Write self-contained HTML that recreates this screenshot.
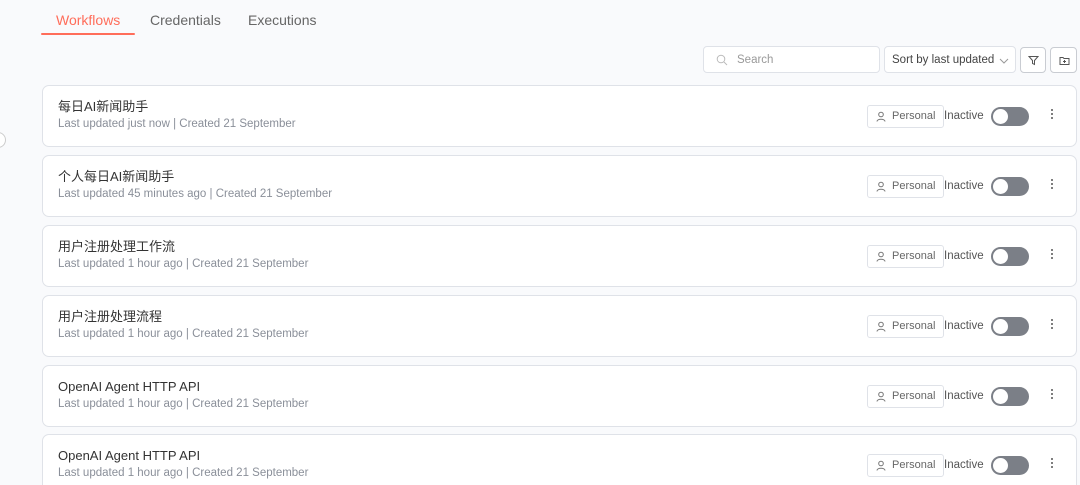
<!DOCTYPE html>
<html><head><meta charset="utf-8"><style>
*{box-sizing:border-box;margin:0;padding:0}
html,body{width:1080px;height:485px;overflow:hidden}
body{background:#f9fafc;font-family:"Liberation Sans","Noto Sans CJK SC",sans-serif;position:relative;color:#333}
.tab{position:absolute;top:12px;font-size:14px;color:#666;line-height:16px}
.ul{position:absolute;left:41px;top:33px;width:94px;height:2px;background:#ff6d5a;border-radius:1px}
.box{position:absolute;background:#fff;border:1px solid #dfe2e8;border-radius:4px}
.card{position:absolute;left:42px;width:1035px;height:62px;background:#fff;border:1px solid #dfe2e8;border-radius:7px}
.t{position:absolute;left:15px;top:13px;font-size:13px;color:#333;line-height:16px;height:16px}
.s{position:absolute;left:15px;top:31px;font-size:11.5px;color:#8a8f99;line-height:14px}
.p{position:absolute;left:824px;top:19px;width:77px;height:23px;border:1px solid #dfe2e8;border-radius:3px;font-size:11px;color:#666;padding-left:24px;line-height:21px}
.p svg{position:absolute;left:8px;top:5px}
.in{position:absolute;left:901px;top:23px;font-size:11.5px;color:#555;line-height:14px}
.tg{position:absolute;left:948px;top:21px;width:38px;height:19px;border-radius:10px;background:#7b7f87}
.tg:after{content:"";position:absolute;left:2px;top:2px;width:15px;height:15px;border-radius:50%;background:#fff}
.d{position:absolute;left:1008px;top:23px;width:2px}
.d i{display:block;width:2px;height:2px;background:#555;border-radius:1px;margin-bottom:2px}
</style></head><body>
<div class="tab" style="left:56px;color:#ff6d5a">Workflows</div>
<div class="tab" style="left:150px">Credentials</div>
<div class="tab" style="left:248px">Executions</div>
<div class="ul"></div>
<div style="position:absolute;left:-10px;top:132px;width:16px;height:16px;border:1px solid #ccc;border-radius:50%;background:#fff"></div>

<div class="box" style="left:703px;top:46px;width:177px;height:27px">
<svg style="position:absolute;left:12px;top:7px" width="12" height="12" viewBox="0 0 12 12" fill="none" stroke="#bbb" stroke-width="1"><circle cx="5" cy="5" r="3.8"/><path d="M8 8l3 3"/></svg>
<span style="position:absolute;left:33px;top:6px;font-size:11.5px;color:#999;line-height:14px">Search</span></div>
<div class="box" style="left:884px;top:46px;width:132px;height:27px"><span style="position:absolute;left:7px;top:6px;font-size:11.5px;color:#444;line-height:14px">Sort by last updated</span>
<svg style="position:absolute;left:114px;top:11px" width="10" height="6" viewBox="0 0 10 6" fill="none" stroke="#999"><path d="M1 1l4 4 4-4"/></svg></div>
<div class="box" style="left:1020px;top:47px;width:26px;height:26px;border-color:#c9ccd2">
<svg style="position:absolute;left:7px;top:7px" width="11" height="11" viewBox="0 0 11 11" fill="none" stroke="#555"><path d="M1 1.5h9L6.5 5.5v4L4.5 8.5v-3z"/></svg></div>
<div class="box" style="left:1050px;top:47px;width:27px;height:26px;border-color:#c9ccd2">
<svg style="position:absolute;left:8px;top:8px" width="11" height="10" viewBox="0 0 11 10" fill="none" stroke="#555"><path d="M1 1.5h3l1 1h5v6H1z"/><path d="M5.5 4v3M4 5.5h3"/></svg></div>

<div class="card" style="top:85px"><div class="t">每日AI新闻助手</div><div class="s">Last updated just now | Created 21 September</div><div class="p"><svg width="10" height="11" viewBox="0 0 10 11" fill="none" stroke="#777"><circle cx="5" cy="3.5" r="2.3"/><path d="M1 10.5c0-3 8-3 8 0"/></svg>Personal</div><div class="in">Inactive</div><div class="tg"></div><div class="d"><i></i><i></i><i></i></div></div>
<div class="card" style="top:155px"><div class="t">个人每日AI新闻助手</div><div class="s">Last updated 45 minutes ago | Created 21 September</div><div class="p"><svg width="10" height="11" viewBox="0 0 10 11" fill="none" stroke="#777"><circle cx="5" cy="3.5" r="2.3"/><path d="M1 10.5c0-3 8-3 8 0"/></svg>Personal</div><div class="in">Inactive</div><div class="tg"></div><div class="d"><i></i><i></i><i></i></div></div>
<div class="card" style="top:225px"><div class="t">用户注册处理工作流</div><div class="s">Last updated 1 hour ago | Created 21 September</div><div class="p"><svg width="10" height="11" viewBox="0 0 10 11" fill="none" stroke="#777"><circle cx="5" cy="3.5" r="2.3"/><path d="M1 10.5c0-3 8-3 8 0"/></svg>Personal</div><div class="in">Inactive</div><div class="tg"></div><div class="d"><i></i><i></i><i></i></div></div>
<div class="card" style="top:295px"><div class="t">用户注册处理流程</div><div class="s">Last updated 1 hour ago | Created 21 September</div><div class="p"><svg width="10" height="11" viewBox="0 0 10 11" fill="none" stroke="#777"><circle cx="5" cy="3.5" r="2.3"/><path d="M1 10.5c0-3 8-3 8 0"/></svg>Personal</div><div class="in">Inactive</div><div class="tg"></div><div class="d"><i></i><i></i><i></i></div></div>
<div class="card" style="top:365px"><div class="t">OpenAI Agent HTTP API</div><div class="s">Last updated 1 hour ago | Created 21 September</div><div class="p"><svg width="10" height="11" viewBox="0 0 10 11" fill="none" stroke="#777"><circle cx="5" cy="3.5" r="2.3"/><path d="M1 10.5c0-3 8-3 8 0"/></svg>Personal</div><div class="in">Inactive</div><div class="tg"></div><div class="d"><i></i><i></i><i></i></div></div>
<div class="card" style="top:434px"><div class="t">OpenAI Agent HTTP API</div><div class="s">Last updated 1 hour ago | Created 21 September</div><div class="p"><svg width="10" height="11" viewBox="0 0 10 11" fill="none" stroke="#777"><circle cx="5" cy="3.5" r="2.3"/><path d="M1 10.5c0-3 8-3 8 0"/></svg>Personal</div><div class="in">Inactive</div><div class="tg"></div><div class="d"><i></i><i></i><i></i></div></div>
</body></html>
